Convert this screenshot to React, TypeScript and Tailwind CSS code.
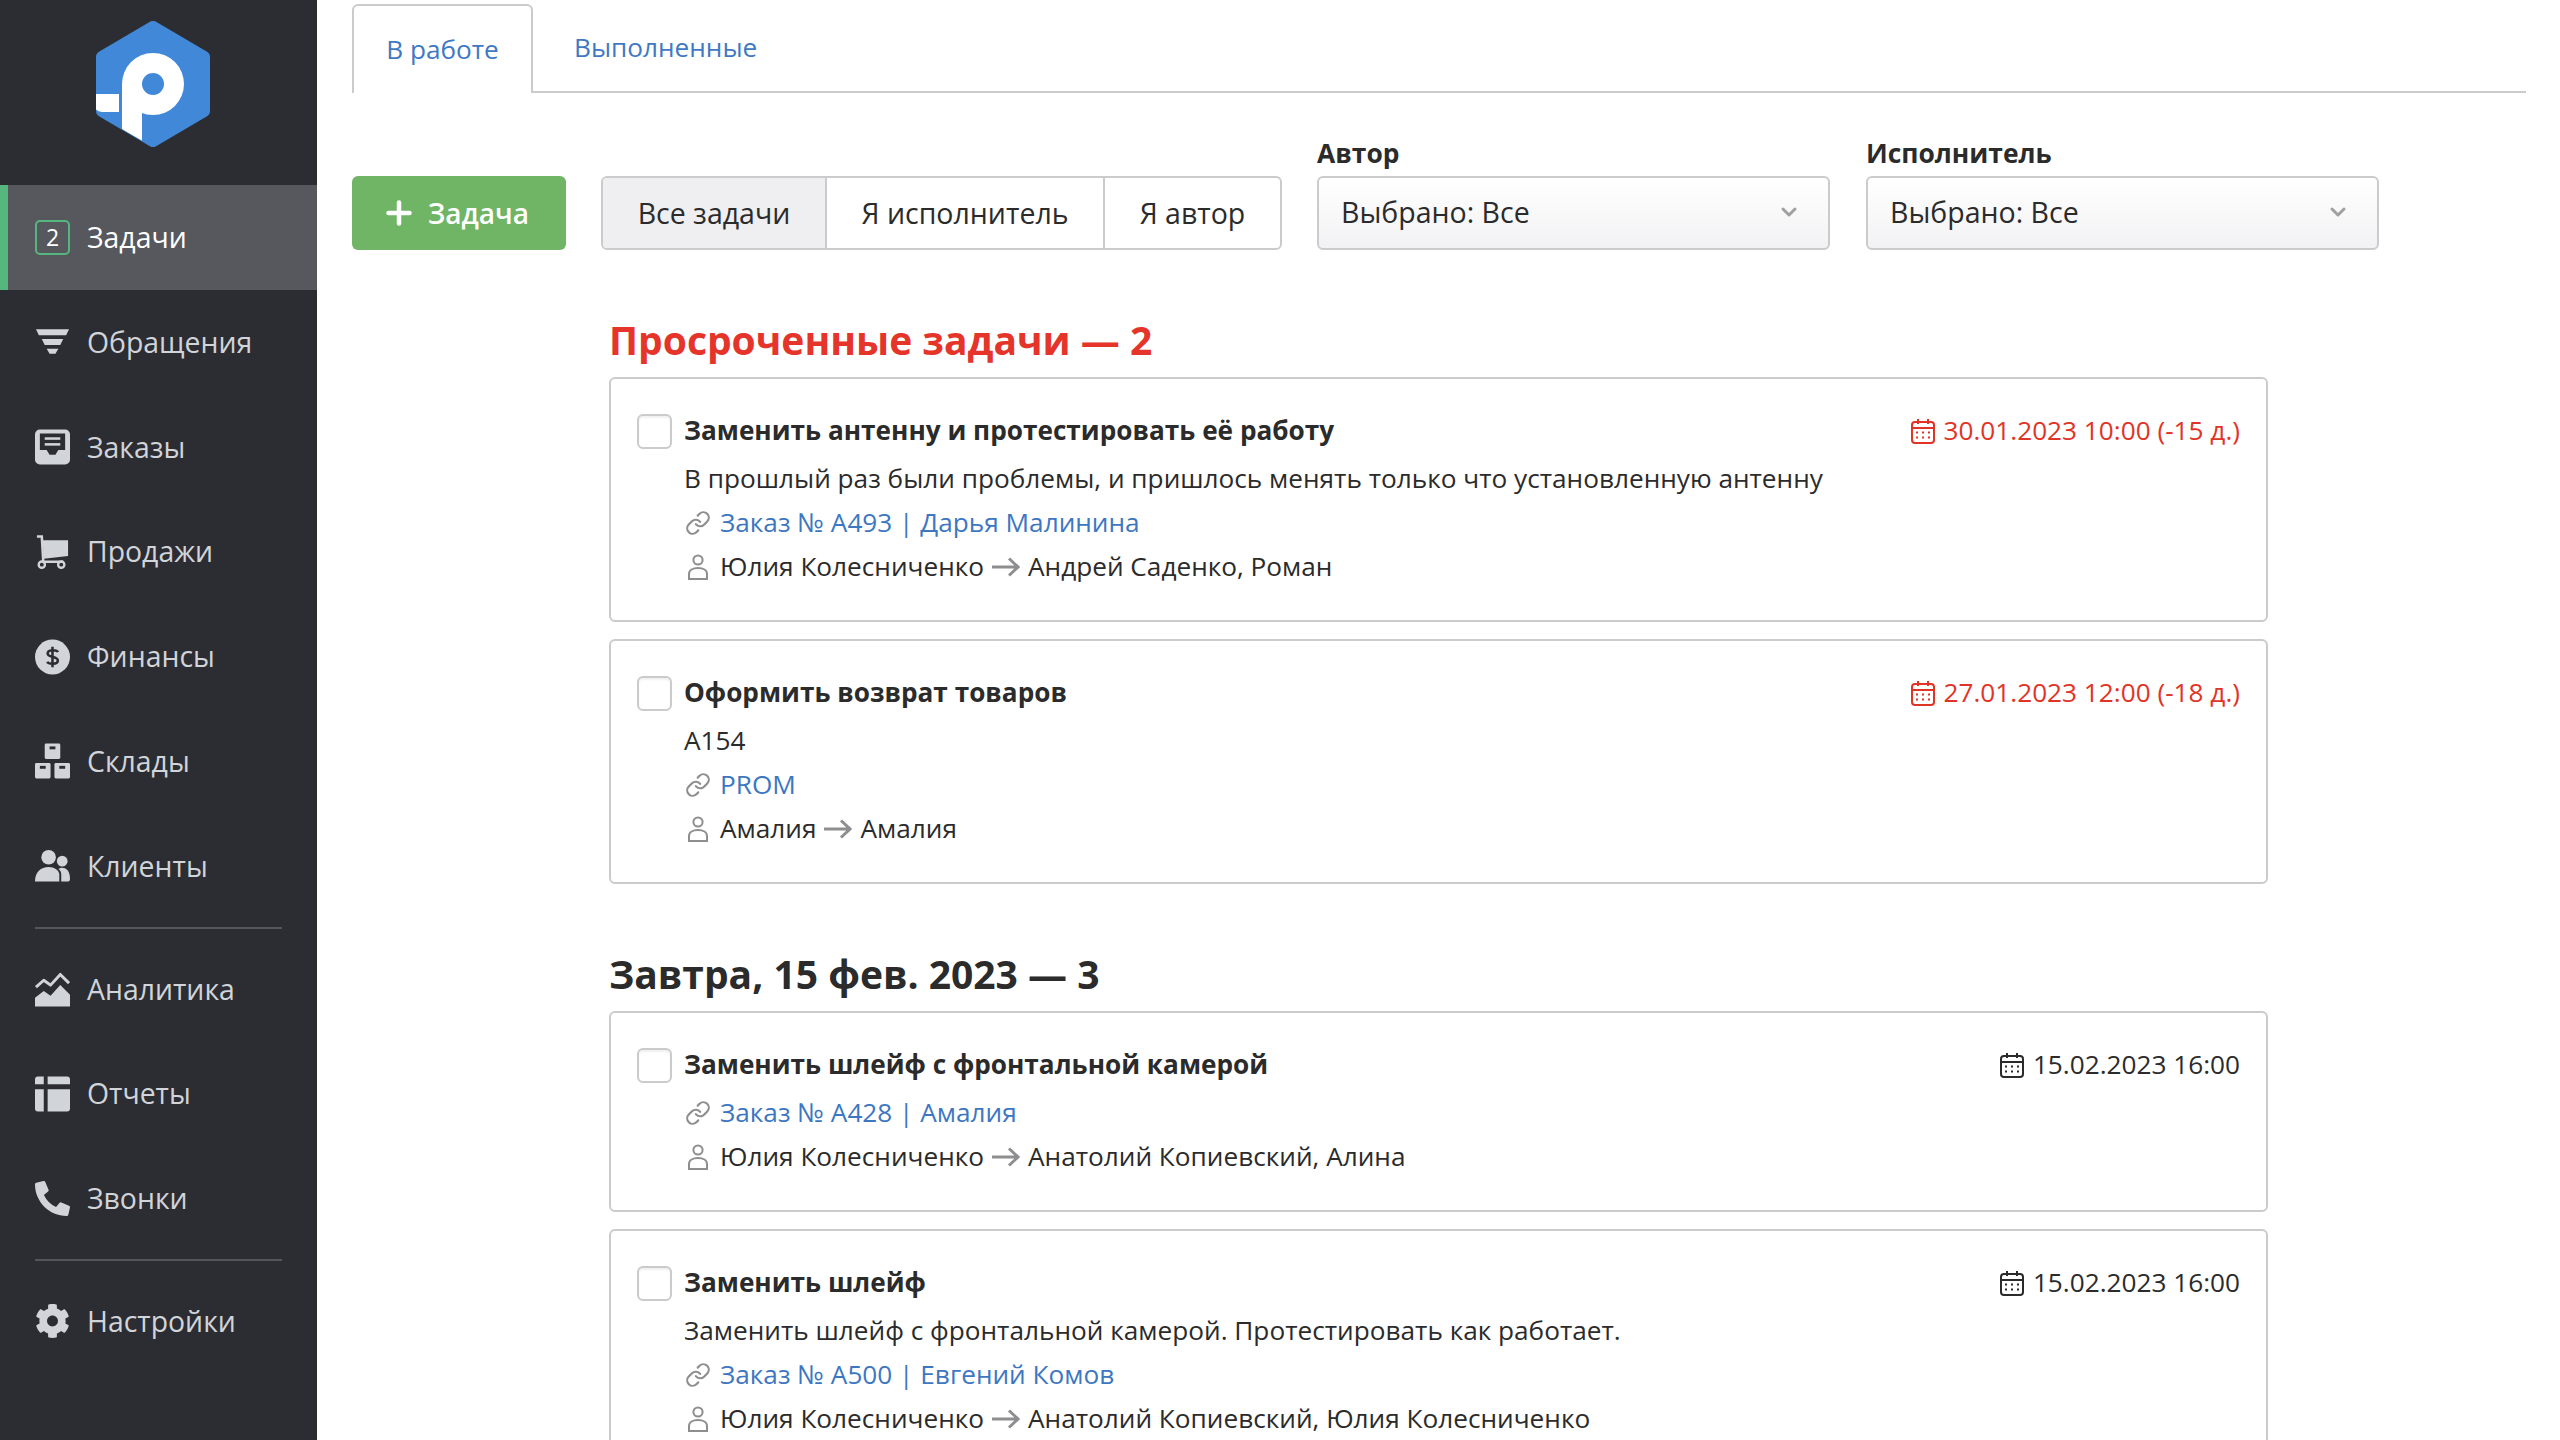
import { ChevronDown, Link as LinkIcon, Plus } from 'lucide-react'
import type { ReactNode } from 'react'
import { FaCog, FaPhoneAlt } from 'react-icons/fa'

const Logo = () => (
  <svg width="114" height="127" viewBox="96 21 114 127">
    <defs>
      <clipPath id="hex">
        <path d="M153 21 L210 54 V114 L153 147 L96 114 V54 Z" />
      </clipPath>
    </defs>
    <path
      d="M153 27 L204 57 V111 L153 141 L102 111 V57 Z"
      fill="#4189d8"
      stroke="#4189d8"
      strokeWidth="12"
      strokeLinejoin="round"
    />
    <g clipPath="url(#hex)" fill="#fff">
      <circle cx="153" cy="84" r="31" />
      <path d="M122 84 H142 V145 L122 129 Z" />
      <path d="M94 94 H119 V112 H102 Q96 112 94 106 Z" />
    </g>
    <circle cx="153" cy="84" r="11" fill="#4189d8" />
  </svg>
)

const iconFill = '#d1d4d9'
const iconDark = '#2c2d32'

const FilterIcon = () => (
  <svg width="36" height="36" viewBox="0 0 36 36" fill={iconFill}>
    <path d="M1 5 H35 L32 11 H4 Z" />
    <path d="M7 15 H29 L26 21 H10 Z" />
    <path d="M12 25 H24 L21 30 H15 Z" />
  </svg>
)

const OrdersIcon = () => (
  <svg width="36" height="36" viewBox="0 0 36 36">
    <rect width="36" height="36" y="0" rx="5" fill={iconFill} />
    <path d="M5 4 H31 V21 H24 L21 26 H15 L12 21 H5 Z" fill={iconDark} />
    <rect x="10" y="8" width="16" height="2.6" fill={iconFill} />
    <rect x="10" y="14" width="16" height="2.6" fill={iconFill} />
  </svg>
)

const CartIcon = () => (
  <svg width="36" height="36" viewBox="0 0 36 36">
    <path d="M8 6 H34 V22 L9 25 Z" fill={iconFill} />
    <path d="M2 2 H7 L8.5 28 H29" fill="none" stroke={iconFill} strokeWidth="2.6" />
    <circle cx="7" cy="31" r="3.2" fill="none" stroke={iconFill} strokeWidth="2.4" />
    <circle cx="27" cy="31" r="3.2" fill="none" stroke={iconFill} strokeWidth="2.4" />
  </svg>
)

const DollarIcon = () => (
  <svg width="36" height="36" viewBox="0 0 36 36">
    <circle cx="18" cy="18" r="18" fill={iconFill} />
    <path
      d="M23.5 13 C22.5 10.5 13 10 13 14.5 C13 19 23.5 17 23.5 21.5 C23.5 26 14 25.5 12.5 23 M18 7.5 V28.5"
      fill="none"
      stroke={iconDark}
      strokeWidth="2.6"
    />
  </svg>
)

const BoxesIcon = () => (
  <svg width="36" height="36" viewBox="0 0 36 36" fill={iconFill}>
    <rect x="10" y="0" width="16" height="16" rx="1.5" />
    <rect x="0" y="20" width="16" height="16" rx="1.5" />
    <rect x="20" y="20" width="16" height="16" rx="1.5" />
    <g fill={iconDark}>
      <rect x="15" y="3" width="6" height="3" />
      <rect x="5" y="23" width="6" height="3" />
      <rect x="25" y="23" width="6" height="3" />
    </g>
  </svg>
)

const UsersIcon = () => (
  <svg width="36" height="36" viewBox="0 0 36 36" fill={iconFill}>
    <circle cx="14" cy="9" r="7.5" />
    <circle cx="28" cy="13" r="5.5" />
    <path d="M0 34 C0 24 6 19 14 19 C20 19 24 22 25 26 V34 Z" />
    <path d="M26 20 C31 19 36 22 36 31 Q36 34 33 34 H27 V27 C27 24 26 22 24 21 Z" />
  </svg>
)

const ChartIcon = () => (
  <svg width="36" height="36" viewBox="0 0 36 36">
    <path d="M0 36 V27 L9 20 L16 25 L26 14 L36 24 V36 Z" fill={iconFill} />
    <path
      d="M1 16 L9 9 L16 14 L26 3 L35 12"
      fill="none"
      stroke={iconFill}
      strokeWidth="3"
      strokeLinejoin="round"
    />
  </svg>
)

const TableIcon = () => (
  <svg width="36" height="36" viewBox="0 0 36 36" fill={iconFill}>
    <path d="M3 0 H9 V8 H0 V3 Q0 0 3 0 Z" />
    <path d="M0 13 H9 V36 H3 Q0 36 0 33 Z" />
    <path d="M13 0 H33 Q36 0 36 3 V8 H13 Z" />
    <path d="M13 13 H36 V33 Q36 36 33 36 H13 Z" />
  </svg>
)

const CalendarIcon = ({ color }: { color: string }) => (
  <svg width="24" height="26" viewBox="0 0 24 26" fill="none" stroke={color} strokeWidth="2">
    <rect x="1" y="4" width="22" height="21" rx="3" />
    <path d="M1 10 H23 M7 1 V6 M17 1 V6" />
    <path
      d="M5 14.5 H7 M11 14.5 H13 M17 14.5 H19 M5 19.5 H7 M11 19.5 H13 M17 19.5 H19"
      strokeWidth="2"
    />
  </svg>
)

const PersonIcon = () => (
  <svg width="22" height="26" viewBox="0 0 22 26" fill="none" stroke="#8e8e90" strokeWidth="2">
    <circle cx="11" cy="6" r="4.6" />
    <path d="M2 25 V20 C2 16 6 14 11 14 C16 14 20 16 20 20 V25 Z" />
  </svg>
)

const FlowArrow = () => (
  <svg width="28" height="20" viewBox="0 0 28 20" fill="none" stroke="#8e8e90" strokeWidth="3" className="mx-[8px] shrink-0">
    <path d="M0 10 H26 M17 1.5 L26 10 L17 18.5" />
  </svg>
)

type NavItem = { label: string; icon: ReactNode; active?: boolean }

const navGroups: NavItem[][] = [
  [
    {
      label: 'Задачи',
      active: true,
      icon: (
        <div className="flex h-[35px] w-[35px] items-center justify-center rounded-[5px] border-2 border-[#55b77e] text-[23px] text-white">
          2
        </div>
      ),
    },
    { label: 'Обращения', icon: <FilterIcon /> },
    { label: 'Заказы', icon: <OrdersIcon /> },
    { label: 'Продажи', icon: <CartIcon /> },
    { label: 'Финансы', icon: <DollarIcon /> },
    { label: 'Склады', icon: <BoxesIcon /> },
    { label: 'Клиенты', icon: <UsersIcon /> },
  ],
  [
    { label: 'Аналитика', icon: <ChartIcon /> },
    { label: 'Отчеты', icon: <TableIcon /> },
    { label: 'Звонки', icon: <FaPhoneAlt size={35} color={iconFill} /> },
  ],
  [{ label: 'Настройки', icon: <FaCog size={36} color={iconFill} /> }],
]

const Sidebar = () => (
  <aside className="h-full w-[317px] shrink-0 bg-[#2c2d32]">
    <div className="h-[185px] pl-[96px] pt-[21px]">
      <Logo />
    </div>
    {navGroups.map((group, i) => (
      <div key={i}>
        {i > 0 && <div className="mx-[35px] my-2 h-[2px] w-[247px] bg-[#55565b]" />}
        {group.map((item) => (
          <div
            key={item.label}
            className={
              item.active
                ? 'flex h-[104.8px] items-center gap-[17px] border-l-[8px] border-[#55b77e] bg-[#57585d] pl-[27px] text-[28.4px] text-white'
                : 'flex h-[104.8px] items-center gap-[17px] pl-[35px] text-[28.4px] text-[#d1d4d9]'
            }
          >
            <div className="flex w-[35px] justify-center">{item.icon}</div>
            <span>{item.label}</span>
          </div>
        ))}
      </div>
    ))}
  </aside>
)

const Toolbar = () => (
  <div className="mt-[43px] flex items-end">
    <button className="flex h-[74px] w-[214px] items-center gap-[11px] rounded-[6px] bg-[#70b566] pl-[29px] text-[28px] font-semibold text-white">
      <Plus size={36} strokeWidth={3} />
      Задача
    </button>
    <div className="ml-[35px] flex h-[74px] w-[681px] overflow-hidden rounded-[6px] border-2 border-[#cbcbce] text-[28.5px] text-[#2b2b2b]">
      <div className="flex w-[224px] items-center justify-center border-r-2 border-[#cbcbce] bg-[#efeff1]">
        Все задачи
      </div>
      <div className="flex w-[278px] items-center justify-center border-r-2 border-[#cbcbce]">
        Я исполнитель
      </div>
      <div className="flex flex-1 items-center justify-center">Я автор</div>
    </div>
    <FilterSelect label="Автор" className="ml-[35px]" />
    <FilterSelect label="Исполнитель" className="ml-[36px]" />
  </div>
)

const FilterSelect = ({ label, className }: { label: string; className: string }) => (
  <div className={className}>
    <div className="flex h-[40px] items-start pt-[4px] text-[26.4px] font-bold leading-none text-[#2b2b2b]">
      {label}
    </div>
    <div className="flex h-[74px] w-[513px] items-center justify-between rounded-[6px] border-2 border-[#cbcbce] bg-gradient-to-b from-white to-[#f2f2f4] pb-[2px] pl-[22px] pr-[27px] text-[28.5px] text-[#2b2b2b]">
      Выбрано: Все
      <ChevronDown size={24} color="#a0a0a2" strokeWidth={3} />
    </div>
  </div>
)

type Task = {
  title: string
  date: string
  overdue?: boolean
  desc?: string
  link: string
  from: string
  to: string
}

const overdueTasks: Task[] = [
  {
    title: 'Заменить антенну и протестировать её работу',
    date: '30.01.2023 10:00 (-15 д.)',
    overdue: true,
    desc: 'В прошлый раз были проблемы, и пришлось менять только что установленную антенну',
    link: 'Заказ № А493 | Дарья Малинина',
    from: 'Юлия Колесниченко',
    to: 'Андрей Саденко, Роман',
  },
  {
    title: 'Оформить возврат товаров',
    date: '27.01.2023 12:00 (-18 д.)',
    overdue: true,
    desc: 'A154',
    link: 'PROM',
    from: 'Амалия',
    to: 'Амалия',
  },
]

const tomorrowTasks: Task[] = [
  {
    title: 'Заменить шлейф с фронтальной камерой',
    date: '15.02.2023 16:00',
    link: 'Заказ № А428 | Амалия',
    from: 'Юлия Колесниченко',
    to: 'Анатолий Копиевский, Алина',
  },
  {
    title: 'Заменить шлейф',
    date: '15.02.2023 16:00',
    desc: 'Заменить шлейф с фронтальной камерой. Протестировать как работает.',
    link: 'Заказ № А500 | Евгений Комов',
    from: 'Юлия Колесниченко',
    to: 'Анатолий Копиевский, Юлия Колесниченко',
  },
]

const TaskCard = ({ task }: { task: Task }) => (
  <div className="w-[1659px] rounded-[6px] border-2 border-[#cbcbce] pb-[31px] pl-[26px] pr-[26px] pt-[30px] text-[26.2px] text-[#2b2b2b]">
    <div className="mb-1 flex h-[44px] items-center">
      <div className="mr-[12px] mt-[1px] h-[35px] w-[35px] rounded-[6px] border-2 border-[#cbcbce] shadow-[inset_0_2px_2px_rgba(0,0,0,0.06)]" />
      <span className="font-bold">{task.title}</span>
      <span
        className={
          task.overdue
            ? 'ml-auto flex items-center gap-[9px] text-[#e03426]'
            : 'ml-auto flex items-center gap-[9px] text-[#2b2b2b]'
        }
      >
        <CalendarIcon color={task.overdue ? '#e03426' : '#2b2b2b'} />
        {task.date}
      </span>
    </div>
    <div className="pl-[47px]">
      {task.desc && <div className="flex h-[44px] items-center">{task.desc}</div>}
      <div className="flex h-[44px] items-center text-[#3d77c2]">
        <div className="w-[36px] pl-[1px]">
          <LinkIcon size={26} color="#8e8e90" strokeWidth={2} />
        </div>
        {task.link}
      </div>
      <div className="flex h-[44px] items-center">
        <div className="w-[36px] pl-[3px]">
          <PersonIcon />
        </div>
        {task.from}
        <FlowArrow />
        {task.to}
      </div>
    </div>
  </div>
)

const Section = ({ title, red, tasks }: { title: string; red?: boolean; tasks: Task[] }) => (
  <section className="ml-[257px]">
    <h2
      className={
        red
          ? 'mb-[14px] flex h-[46px] items-center text-[39px] font-bold text-[#e5352b]'
          : 'mb-[14px] flex h-[46px] items-center text-[39px] font-bold text-[#2b2b2b]'
      }
    >
      {title}
    </h2>
    <div className="flex flex-col gap-[17px]">
      {tasks.map((task) => (
        <TaskCard key={task.title} task={task} />
      ))}
    </div>
  </section>
)

export default function App() {
  return (
    <div className="flex h-[1440px] w-[2560px] overflow-hidden bg-white font-['Open_Sans',sans-serif]">
      <Sidebar />
      <main className="flex-1 pl-[35px] pr-[34px] pt-[4px]">
        <div className="flex h-[89px] border-b-2 border-[#cbcbce] text-[26.2px] text-[#3f79c4]">
          <div className="-mb-[2px] flex h-[89px] w-[181px] items-center justify-center rounded-t-[6px] border-2 border-b-0 border-[#cbcbce] bg-white">
            В работе
          </div>
          <div className="ml-[41px] flex items-center">Выполненные</div>
        </div>
        <Toolbar />
        <div className="mt-[67px]">
          <Section title="Просроченные задачи — 2" red tasks={overdueTasks} />
        </div>
        <div className="mt-[67px]">
          <Section title="Завтра, 15 фев. 2023 — 3" tasks={tomorrowTasks} />
        </div>
      </main>
    </div>
  )
}
